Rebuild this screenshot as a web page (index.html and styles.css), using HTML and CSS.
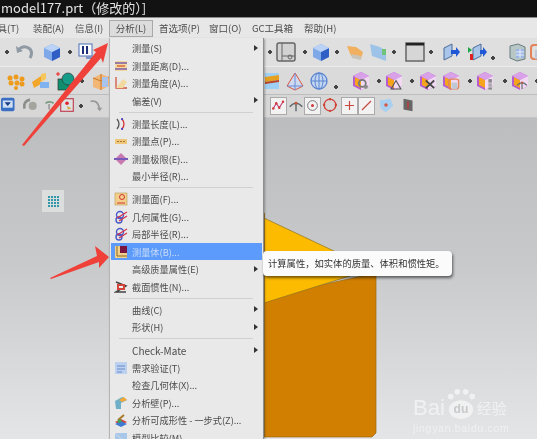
FILE: index.html
```html
<!DOCTYPE html>
<html lang="zh-CN">
<head>
  <meta charset="UTF-8" />
  <title>model177.prt</title>
  <link rel="stylesheet" href="styles.css">
</head>
<body>

  <svg class="defs" width="0" height="0">
    <symbol id="cube" viewBox="0 0 20 20"><path d="M2 6l8-4 8 4v9l-8 4-8-4z" fill="#7fa8e8"/><path d="M10 10l8-4v9l-8 4z" fill="#2f5fc4"/><path d="M2 6l8-4 8 4-8 4z" fill="#b9d2f5"/></symbol>
    <symbol id="book" viewBox="0 0 20 20"><rect x="3" y="2" width="13" height="12" fill="#fff" stroke="#4a6fb5"/><rect x="6" y="4" width="2" height="8" fill="#1d2f78"/><rect x="10" y="4" width="2" height="8" fill="#1d2f78"/><path d="M10 14h8v3h-8z" fill="#7f93c4"/></symbol>
    <symbol id="undo" viewBox="0 0 20 20"><path d="M3 8q6-6 12-1 3 4 0 9" fill="none" stroke="#8f9aa5" stroke-width="3"/><path d="M1 4l1 7 6-2z" fill="#8f9aa5"/></symbol>
    <symbol id="panel" viewBox="0 0 20 20"><rect x="1" y="1" width="18" height="18" rx="2" fill="#d2d2d2" stroke="#666" stroke-width="1.5"/><path d="M6 1v18M6 14h13" stroke="#666"/><circle cx="14" cy="15" r="2" fill="none" stroke="#666"/></symbol>
    <symbol id="fold-o" viewBox="0 0 20 20"><path d="M2 4l9 1 7 5-2 7-10-3z" fill="#f0b060"/><path d="M6 12l10 2v4l-9-2z" fill="#c9c4b8"/></symbol>
    <symbol id="fold-b" viewBox="0 0 20 20"><path d="M2 2l10 3 6 4v10l-14-5z" fill="#9ec3e8"/><rect x="14" y="7" width="4" height="6" fill="#6fc47a"/></symbol>
    <symbol id="window" viewBox="0 0 20 20"><rect x="1" y="1" width="18" height="18" fill="#d6d6d6" stroke="#666" stroke-width="1.5"/><rect x="1" y="1" width="18" height="2.5" fill="#222"/></symbol>
    <symbol id="box-arrow" viewBox="0 0 20 20"><path d="M3 6l8-4v12l-8 4z" fill="#a9c6ea" stroke="#4a6b9a"/><path d="M10 8h5V5l4 5-4 5v-3h-5z" fill="#1f57d6"/></symbol>
    <symbol id="box-arrow2" viewBox="0 0 20 20"><path d="M6 6l8-4v12l-8 4z" fill="#a9c6ea" stroke="#4a6b9a"/><path d="M1 5l4 3-4 3z" fill="#1fa84a"/><path d="M3 12h3v6h-3z" fill="#d22"/><path d="M13 8h3V5l4 5-4 5v-3h-3z" fill="#1f57d6"/></symbol>
    <symbol id="doc" viewBox="0 0 20 20"><path d="M3 4l8-2 7 3v12l-8 2-7-3z" fill="#b9c6c6" stroke="#6b7d7d"/><path d="M9 7h8v9h-8z" fill="#9cb5e6"/><path d="M9 10h8M9 13h8M13 7v9" stroke="#e8f0f8"/></symbol>
    <symbol id="doc-o" viewBox="0 0 20 20"><rect x="4" y="3" width="14" height="14" rx="3" fill="none" stroke="#e2835a" stroke-width="2"/><rect x="8" y="8" width="8" height="9" fill="#bfc9d6"/></symbol>
    <symbol id="dots-o" viewBox="0 0 20 20"><g fill="#ee9a1c"><circle cx="4" cy="7" r="2.5"/><circle cx="10" cy="6" r="2.5"/><circle cx="16" cy="8" r="2.5"/><circle cx="5" cy="12" r="2.5"/><circle cx="11" cy="12" r="2.5"/><circle cx="16" cy="13" r="2.5"/><circle cx="10" cy="17" r="2"/></g></symbol>
    <symbol id="orange-cube" viewBox="0 0 20 20"><path d="M1 11l9-6v8l-7 4z" fill="#f2a72a"/><path d="M10 3l5-1v6l-5 3z" fill="#f5c65a"/><rect x="9" y="11" width="9" height="6" fill="#7fb2ee"/></symbol>
    <symbol id="green" viewBox="0 0 20 20"><rect x="2" y="8" width="11" height="11" fill="#0f8f6d" stroke="#333" stroke-width=".7"/><circle cx="12" cy="8" r="6" fill="#159c88" stroke="#333" stroke-width=".7"/><path d="M2 1v4M0 3h4" stroke="#e22"/></symbol>
    <symbol id="box-o" viewBox="0 0 20 20"><path d="M2 7l8-4 8 3v9l-8 4-8-3z" fill="#f2b675"/><path d="M10 3v16M2 7l8 3 8-4" stroke="#c8772c" fill="none"/><rect x="11" y="6" width="6" height="10" fill="#a8c4ee"/></symbol>
    <symbol id="box-y" viewBox="0 0 20 20"><rect x="0" y="2" width="14" height="16" fill="#9ed0f5"/><path d="M0 6l14-2v5l-14 2z" fill="#e6a020"/><path d="M0 11l14-2v2l-14 2z" fill="#b8442a"/></symbol>
    <symbol id="cone" viewBox="0 0 20 20"><path d="M10 2l8 13-8 4-8-4z" fill="#cfd9ef" stroke="#d8553a"/><path d="M10 2v17M2 15l16 0" stroke="#6b8bd8" fill="none"/></symbol>
    <symbol id="sphere" viewBox="0 0 20 20"><circle cx="10" cy="10" r="8" fill="#c3d6f2" stroke="#5b85d0" stroke-width="1.3"/><path d="M2 10h16M10 2v16" stroke="#5b85d0"/><ellipse cx="10" cy="10" rx="4" ry="8" fill="none" stroke="#5b85d0"/></symbol>
    <symbol id="pcube" viewBox="0 0 20 20"><path d="M1 5l8-4 8 4v10l-8 4-8-4z" fill="#b65ccf"/><path d="M3 6l6 3v8l-6-3z" fill="#f7a41d"/><path d="M1 5l8-4 8 4-8 4z" fill="#d9a2e8"/><path d="M9 9l8-4v10l-8 4z" fill="#f1d9f3"/></symbol>
    <symbol id="cross" viewBox="0 0 20 20"><path d="M4 5l12 11M16 5L4 16" stroke="#444" stroke-width="2.5"/></symbol>
    <symbol id="tri" viewBox="0 0 20 20"><path d="M10 5l7 12H3z" fill="none" stroke="#555" stroke-width="1.5"/></symbol>
    <symbol id="gear" viewBox="0 0 20 20"><circle cx="9" cy="9" r="5" fill="none" stroke="#777" stroke-width="2.5"/><circle cx="14" cy="14" r="3" fill="#8b8b8b"/></symbol>
    <symbol id="bars" viewBox="0 0 20 20"><rect x="12" y="3" width="5" height="5" fill="#888"/><rect x="12" y="9" width="5" height="5" fill="#aaa"/><rect x="12" y="15" width="5" height="3" fill="#888"/></symbol>
    <symbol id="wave" viewBox="0 0 20 20"><path d="M3 14l4-7 4 6 5-8" fill="none" stroke="#c03a70" stroke-width="1.5"/><g fill="#d2353a"><circle cx="3" cy="14" r="1.6"/><circle cx="7" cy="7" r="1.6"/><circle cx="11" cy="13" r="1.6"/><circle cx="16" cy="5" r="1.6"/></g></symbol>
    <symbol id="fork" viewBox="0 0 20 20"><path d="M10 8v9M3 12q7-8 14 0" fill="none" stroke="#606a6a" stroke-width="1.6"/><circle cx="10" cy="8" r="1.5" fill="#c53"/></symbol>
    <symbol id="target" viewBox="0 0 20 20"><circle cx="10" cy="10" r="6.5" fill="none" stroke="#777" stroke-width="1.3"/><circle cx="10" cy="10" r="2" fill="#d2353a"/></symbol>
    <symbol id="ring" viewBox="0 0 20 20"><circle cx="10" cy="10" r="6.5" fill="none" stroke="#d2453a" stroke-width="1.5"/><g fill="#c43"><circle cx="10" cy="3.5" r="1.3"/><circle cx="10" cy="16.5" r="1.3"/><circle cx="3.5" cy="10" r="1.3"/><circle cx="16.5" cy="10" r="1.3"/></g></symbol>
    <symbol id="plus" viewBox="0 0 20 20"><path d="M10 4v12M4 10h12" stroke="#c84a40" stroke-width="1.6"/></symbol>
    <symbol id="slash" viewBox="0 0 20 20"><path d="M4 16L16 4" stroke="#c84a40" stroke-width="1.6"/></symbol>
    <symbol id="blue-s" viewBox="0 0 20 20"><path d="M3 5l12-2 3 8-8 7-6-4z" fill="#a9d0f0"/><circle cx="10" cy="10" r="2" fill="#d25a4a"/></symbol>
    <symbol id="dark" viewBox="0 0 20 20"><path d="M5 3l10 2v12l-10-2z" fill="#666"/><path d="M10 6v8" stroke="#c33" stroke-width="1.5"/></symbol>
    <symbol id="drop" viewBox="0 0 20 20"><rect x="0" y="2" width="15" height="15" rx="2" fill="#3b6fc4"/><rect x="2" y="5" width="11" height="8" fill="#cfe0f5"/><path d="M4 7h7l-3.500 4z" fill="#173a80"/></symbol>
    <symbol id="grey-a" viewBox="0 0 20 20"><path d="M4 14q-2-8 6-10" fill="none" stroke="#8a8f8a" stroke-width="3"/><circle cx="13" cy="11" r="4.500" fill="#a5a5a0"/></symbol>
    <symbol id="small-a" viewBox="0 0 20 20"><path d="M5 8q5-3 9 0" fill="none" stroke="#7c9a80" stroke-width="2"/><path d="M9 9v6" stroke="#a0a0a0" stroke-width="2"/></symbol>
    <symbol id="red-box" viewBox="0 0 20 20"><rect x="3" y="3" width="14" height="14" fill="#dfe2e2" stroke="#c04050" stroke-width="1.300"/><circle cx="10" cy="8" r="2" fill="#d23"/><path d="M10 11l5 3-4 1z" fill="#d9a53a"/></symbol>
    <symbol id="curve" viewBox="0 0 20 20"><path d="M4 6q8-2 10 8" fill="none" stroke="#999" stroke-width="2"/><path d="M11 13l3 4 3-4z" fill="#999"/></symbol>

    <symbol id="m-dist" viewBox="0 0 14 14"><rect x="1" y="2" width="12" height="10" fill="#f3d9a0"/><path d="M1 4h12M1 10h12" stroke="#7b5ca8" stroke-width="1.300"/><path d="M3 7h8" stroke="#d8552a" stroke-width="1.300"/></symbol>
    <symbol id="m-angle" viewBox="0 0 14 14"><path d="M2 1v11h11" fill="none" stroke="#d2553f" stroke-width="1.300"/><path d="M2 12L9 3l4 3-4 6z" fill="#f1d9a0"/></symbol>
    <symbol id="m-len" viewBox="0 0 14 14"><path d="M3 2q4 5 0 10" fill="none" stroke="#555" stroke-width="1.300"/><path d="M8 2q4 5 0 10" fill="none" stroke="#d2353a" stroke-width="1.300"/><circle cx="8" cy="2" r="1" fill="#33c"/><circle cx="8" cy="12" r="1" fill="#33c"/></symbol>
    <symbol id="m-pt" viewBox="0 0 14 14"><rect x="1" y="5" width="12" height="5" fill="#eec878"/><path d="M3 7.500h8" stroke="#a8763a" stroke-dasharray="2 1"/></symbol>
    <symbol id="m-lim" viewBox="0 0 14 14"><path d="M7 1l6 6-6 6-6-6z" fill="#c87ab0"/><path d="M0 7h14" stroke="#7a5ab8" stroke-width="2"/></symbol>
    <symbol id="m-face" viewBox="0 0 14 14"><rect x="1" y="1" width="12" height="12" fill="#f2d08a" stroke="#b89a5a" stroke-width=".6"/><circle cx="8" cy="5" r="2.500" fill="none" stroke="#d2353a"/><path d="M3 11h8" stroke="#d2353a"/></symbol>
    <symbol id="m-geo" viewBox="0 0 14 14"><circle cx="6" cy="5" r="3.500" fill="none" stroke="#4a5ac8" stroke-width="1.400"/><circle cx="5" cy="10" r="3" fill="none" stroke="#4a5ac8" stroke-width="1.400"/><path d="M3 8l10-6M5 11l8-5" stroke="#d2354a" stroke-width="1.200"/></symbol>
    <symbol id="m-body" viewBox="0 0 14 14"><rect x="1" y="1" width="12" height="12" fill="#f2d08a"/><path d="M3 1v10h10" fill="none" stroke="#8a6a2a"/><rect x="6" y="1" width="7" height="7" fill="#7a1440"/></symbol>
    <symbol id="m-sec" viewBox="0 0 14 14"><path d="M2 2l10 4-10 6 10 0" fill="none" stroke="#444" stroke-width="1.500"/><path d="M3 4h8v6H3z" fill="#d2453a"/><rect x="5" y="6" width="4" height="2" fill="#eee"/></symbol>
    <symbol id="m-req" viewBox="0 0 14 14"><rect x="1" y="1" width="12" height="12" fill="#bcd0f0"/><path d="M3 5h8M3 8h8M3 11h5" stroke="#6a8ac8"/></symbol>
    <symbol id="m-wall" viewBox="0 0 14 14"><path d="M1 5l7-4 5 3-6 3v6H2z" fill="#6fb0c8"/><path d="M5 4l5-3 3 3-5 2z" fill="#f0a83a"/></symbol>
    <symbol id="m-form" viewBox="0 0 14 14"><path d="M1 9l6-3 6 3-6 3z" fill="#d2453a"/><path d="M1 11l6-3 6 3-6 3z" fill="#3f7ad2"/><path d="M4 7l6-5" stroke="#a87a2a" stroke-width="2"/><path d="M3 8l3-2 2 2-3 2z" fill="#3fa84a"/></symbol>
    <symbol id="m-cmp" viewBox="0 0 14 14"><rect x="1" y="2" width="12" height="11" fill="#a8c8ea"/><path d="M1 2l12 11" stroke="#d2d8e8"/></symbol>
  </svg>

  <div class="app">
    <div class="titlebar">model177.prt（修改的）]</div>

    <div class="menubar">
      <span class="menu-title w-tools">工具(T)</span>
      <span class="menu-title w-asm">装配(A)</span>
      <span class="menu-title w-info">信息(I)</span>
      <span class="menu-title active">分析(L)</span>
      <span class="menu-title w-pref">首选项(P)</span>
      <span class="menu-title w-win">窗口(O)</span>
      <span class="menu-title w-gc">GC工具箱</span>
      <span class="menu-title">帮助(H)</span>
    </div>

    <div class="toolbar row1">
      <div class="side left">
        <i class="d"></i>
        <span class="t g2"><svg><use href="#undo"/></svg></span>
        <span class="t g7"><svg><use href="#cube"/></svg></span>
        <i class="d g2"></i>
        <span class="t"><svg><use href="#book"/></svg></span>
      </div>
      <div class="side">
        <i class="d"></i>
        <span class="t"><svg><use href="#panel"/></svg></span>
        <i class="d g3"></i>
        <span class="t"><svg><use href="#cube"/></svg></span>
        <i class="d"></i>
        <span class="t g2"><svg><use href="#fold-o"/></svg></span>
        <span class="t g3"><svg><use href="#fold-b"/></svg></span>
        <i class="d"></i>
        <span class="t g5"><svg><use href="#window"/></svg></span>
        <i class="d"></i>
        <span class="t g4"><svg><use href="#box-arrow"/></svg></span>
        <span class="t g6"><svg><use href="#box-arrow2"/></svg></span>
        <i class="d low"></i>
        <span class="t g8"><svg><use href="#doc"/></svg></span>
        <span class="t"><svg><use href="#doc-o"/></svg></span>
      </div>
    </div>

    <div class="toolbar row2">
      <div class="side left">
        <span class="t g5"><svg><use href="#dots-o"/></svg></span>
        <span class="t g5"><svg><use href="#orange-cube"/></svg></span>
        <span class="t g5"><svg><use href="#green"/></svg></span>
        <i class="d"></i>
        <span class="t g3"><svg><use href="#box-o"/></svg></span>
      </div>
      <div class="side">
        <span class="t g1"><svg><use href="#box-y"/></svg></span>
        <span class="t"><svg><use href="#cone"/></svg></span>
        <span class="t g4"><svg><use href="#sphere"/></svg></span>
        <i class="d low g1"></i>
        <span class="t g10 icon-mark"><svg><use href="#pcube"/></svg><svg class="mark"><use href="#gear"/></svg></span>
        <i class="d g1"></i>
        <span class="t icon-mark"><svg><use href="#pcube"/></svg><svg class="mark"><use href="#tri"/></svg></span>
        <i class="d g1"></i>
        <span class="t g1 icon-mark"><svg><use href="#pcube"/></svg><svg class="mark"><use href="#cross"/></svg></span>
        <span class="t g3 icon-mark"><svg><use href="#pcube"/></svg><svg class="mark"><use href="#doc-o"/></svg></span>
        <i class="d g2"></i>
        <span class="t icon-mark"><svg><use href="#pcube"/></svg><svg class="mark"><use href="#bars"/></svg></span>
        <i class="d g3"></i>
        <span class="t icon-mark"><svg><use href="#pcube"/></svg><svg class="mark"><use href="#fork"/></svg></span>
        <i class="d"></i>
      </div>
    </div>

    <div class="toolbar row3">
      <div class="side left">
        <span class="t"><svg><use href="#drop"/></svg></span>
        <span class="t g3"><svg><use href="#grey-a"/></svg></span>
        <span class="t g3"><svg><use href="#small-a"/></svg></span>
        <span class="t"><svg><use href="#red-box"/></svg></span>
        <i class="d"></i>
        <span class="t"><svg><use href="#curve"/></svg></span>
      </div>
      <div class="side">
        <span class="t btn"><svg><use href="#wave"/></svg></span>
        <span class="t"><svg><use href="#fork"/></svg></span>
        <span class="t btn"><svg><use href="#target"/></svg></span>
        <span class="t"><svg><use href="#ring"/></svg></span>
        <span class="t btn g3"><svg><use href="#plus"/></svg></span>
        <span class="t btn"><svg><use href="#slash"/></svg></span>
        <span class="t g2"><svg><use href="#blue-s"/></svg></span>
        <span class="t g5"><svg><use href="#dark"/></svg></span>
      </div>
    </div>

    <div class="canvas"></div>

    <svg class="solid" viewBox="0 0 140 240">
      <path d="M0 85L114 60V220L110 224H0z" fill="#d17f00" stroke="#9c6a14" stroke-width=".7"/>
      <path d="M2 5L110 56 2 90z" fill="#fdbb00" stroke="#8c7420" stroke-width=".7"/>
      <rect x="0" y="0" width="3" height="224" fill="#a07a30"/>
    </svg>

    <div class="view-btn">
      <div class="view-dots">
        <i></i><i></i><i></i><i></i><i></i><i></i><i></i><i></i>
        <i></i><i></i><i></i><i></i><i></i><i></i><i></i><i></i>
      </div>
    </div>

    <div class="watermark">
      <div class="wm-top">
        <span class="wm-bai">Bai</span>
        <svg class="wm-paw" viewBox="0 0 30 34">
          <g fill="#f1f1f1"><circle cx="4" cy="9" r="3"/><circle cx="11" cy="4" r="3"/><circle cx="20" cy="4" r="3"/><circle cx="27" cy="9" r="3"/><ellipse cx="15" cy="23" rx="13" ry="10"/></g>
          <text x="15" y="27" class="wm-du">du</text>
        </svg>
        <span class="wm-cn">经验</span>
      </div>
      <div class="wm-url">jingyan.baidu.com</div>
    </div>

    <div class="menu">
      <div class="item sub">测量(S)</div>
      <div class="item"><svg><use href="#m-dist"/></svg>测量距离(D)...</div>
      <div class="item"><svg><use href="#m-angle"/></svg>测量角度(A)...</div>
      <div class="item sub">偏差(V)</div>
      <div class="sep"></div>
      <div class="item"><svg><use href="#m-len"/></svg>测量长度(L)...</div>
      <div class="item"><svg><use href="#m-pt"/></svg>测量点(P)...</div>
      <div class="item"><svg><use href="#m-lim"/></svg>测量极限(E)...</div>
      <div class="item">最小半径(R)...</div>
      <div class="sep"></div>
      <div class="item"><svg><use href="#m-face"/></svg>测量面(F)...</div>
      <div class="item"><svg><use href="#m-geo"/></svg>几何属性(G)...</div>
      <div class="item"><svg><use href="#m-geo"/></svg>局部半径(R)...</div>
      <div class="item selected"><svg><use href="#m-body"/></svg>测量体(B)...</div>
      <div class="item sub">高级质量属性(E)</div>
      <div class="item"><svg><use href="#m-sec"/></svg>截面惯性(N)...</div>
      <div class="sep"></div>
      <div class="item sub">曲线(C)</div>
      <div class="item sub">形状(H)</div>
      <div class="sep"></div>
      <div class="item sub latin">Check-Mate</div>
      <div class="item"><svg><use href="#m-req"/></svg>需求验证(T)</div>
      <div class="item">检查几何体(X)...</div>
      <div class="item"><svg><use href="#m-wall"/></svg>分析壁(P)...</div>
      <div class="item"><svg><use href="#m-form"/></svg>分析可成形性 - 一步式(Z)...</div>
      <div class="item"><svg><use href="#m-cmp"/></svg>模型比较(M)...</div>
    </div>

    <div class="tooltip">计算属性，如实体的质量、体积和惯性矩。</div>

    <svg class="arrows" viewBox="0 0 537 439">
      <path d="M22 145L96 52 93 50 108 43 103 63 101 58 24 146z" fill="#f0403a"/>
      <path d="M50 278L97 256 95 246 109 257 99 268 99 262 51 279z" fill="#f0403a"/>
    </svg>
  </div>

</body>
</html>
```

FILE: styles.css
```css
body {
  margin: 0;
  background-color: #d0d0d0;
  font-family: "Noto Sans CJK SC", "Noto Sans", sans-serif;
  overflow: hidden;
}

.defs {
  display: block;
}

.app {
  position: relative;
  display: flex;
  flex-direction: column;
  width: 537px;
  height: 439px;
  overflow: hidden;
  filter: blur(0.7px);
}

.titlebar {
  flex: 0 0 17px;
  padding-left: 1px;
  background-color: #121212;
  color: #e4e4e4;
  font-size: 13px;
  line-height: 15px;
  white-space: nowrap;
}

.menubar {
  flex: 0 0 21px;
  display: flex;
  align-items: center;
  margin-left: -12px;
  background-color: #e7e7e7;
  border-top: 1px solid #8a8a8a;
  box-sizing: border-box;
  color: #4c4c4c;
  font-size: 9.5px;
  white-space: nowrap;
}

.menu-title {
  flex: none;
}

.w-tools { width: 45px; }
.w-asm { width: 42px; }
.w-info { width: 34px; }
.w-pref { width: 50px; }
.w-win { width: 43px; }
.w-gc { width: 52px; }

.menu-title.active {
  width: 44px;
  height: 17px;
  margin-right: 6px;
  box-sizing: border-box;
  border: 1px solid #a9a9a9;
  background-color: #dcdcdc;
  text-align: center;
  line-height: 15px;
}

.toolbar {
  display: flex;
  box-sizing: border-box;
  background-color: #dfdfdf;
}

.row1 {
  flex: 0 0 28px;
}

.row2 {
  flex: 0 0 28px;
  background-color: #dadada;
  border-top: 1px solid #ececec;
}

.row3 {
  flex: 0 0 24px;
  background-color: #d7d7d7;
  border-top: 1px solid #bdbdbd;
  border-bottom: 1px solid #c4c4c4;
}

.side {
  display: flex;
  align-items: center;
}

.side.left {
  flex: 0 0 264px;
  padding-left: 1px;
  box-sizing: border-box;
}

.row3 .side:last-child {
  padding-left: 6px;
}

.t {
  position: relative;
  flex: none;
  width: 20px;
  height: 20px;
}

.t svg {
  display: block;
  width: 20px;
  height: 20px;
}

.row3 .t {
  width: 17px;
}

.row3 .t svg {
  width: 18px;
  height: 18px;
}

.row3 .t.btn {
  height: 18px;
  box-sizing: border-box;
  border: 1px solid #aaa;
  background-color: #f2f2f2;
}

.row3 .t.btn svg {
  width: 15px;
  height: 15px;
}

.icon-mark .mark {
  position: absolute;
  left: 4px;
  top: 6px;
  width: 14px;
  height: 14px;
}

.d {
  flex: none;
  width: 12px;
  height: 4px;
  background: radial-gradient(circle at center, #444 1.6px, transparent 2px);
}

.d.low {
  margin-top: 12px;
}

.g1 { margin-left: 1px; }
.g2 { margin-left: 2px; }
.g3 { margin-left: 3px; }
.g4 { margin-left: 4px; }
.g5 { margin-left: 5px; }
.g6 { margin-left: 6px; }
.g7 { margin-left: 7px; }
.g8 { margin-left: 8px; }
.g10 { margin-left: 10px; }

.canvas {
  flex: 1;
  background: linear-gradient(180deg, #bcbdbf 0%, #c8c9cb 45%, #e4e5e6 100%);
}

.solid {
  position: absolute;
  left: 262px;
  top: 213px;
  width: 140px;
  height: 240px;
}

.view-btn {
  position: absolute;
  left: 42px;
  top: 190px;
  width: 22px;
  height: 22px;
  display: flex;
  align-items: center;
  justify-content: center;
  background-color: #dcdddd;
}

.view-dots {
  display: grid;
  grid-template-columns: repeat(4, 2px);
  gap: 1px;
}

.view-dots i {
  width: 2px;
  height: 2px;
  background-color: #2f98a8;
}

.watermark {
  position: absolute;
  left: 413px;
  top: 386px;
  color: #f1f1f1;
}

.wm-top {
  display: flex;
  align-items: flex-end;
  height: 34px;
}

.wm-bai {
  font-family: "Liberation Sans", sans-serif;
  font-size: 22px;
  line-height: 24px;
}

.wm-paw {
  width: 28px;
  height: 32px;
  margin: 0 2px;
}

.wm-du {
  fill: #c8c9cb;
  font-family: "Liberation Sans", sans-serif;
  font-size: 13px;
  font-weight: bold;
  text-anchor: middle;
}

.wm-cn {
  font-size: 15px;
  line-height: 24px;
}

.wm-url {
  font-family: "Liberation Sans", sans-serif;
  font-size: 10.5px;
  margin-top: 2px;
  letter-spacing: 0.7px;
  white-space: nowrap;
}

.menu {
  position: absolute;
  left: 109px;
  top: 38px;
  width: 155px;
  height: 410px;
  box-sizing: border-box;
  padding: 1.25px 1px 0;
  background-color: #e9e9e9;
  border-left: 1px solid #b5b5b5;
  border-right: 1px solid #8e8e8e;
  box-shadow: 1px 1px 2px rgba(0, 0, 0, 0.3);
  color: #4c4c4c;
  font-size: 9.2px;
}

.item {
  position: relative;
  display: flex;
  align-items: center;
  height: 17.5px;
  padding-left: 21px;
  white-space: nowrap;
}

.item.latin {
  font-size: 10px;
}

.item svg {
  position: absolute;
  left: 3px;
  top: 2px;
  width: 14px;
  height: 14px;
}

.item.sub::after {
  content: "";
  position: absolute;
  right: 4px;
  top: 5.5px;
  border-left: 4px solid #333;
  border-top: 3px solid transparent;
  border-bottom: 3px solid transparent;
}

.item.selected {
  background-color: #5c9bfb;
  color: #c9dcf8;
}

.sep {
  height: 1px;
  margin: 2.25px 9px 2.25px 8px;
  background-color: #d0d0d0;
}

.tooltip {
  position: absolute;
  left: 263px;
  top: 251px;
  width: 189px;
  height: 25px;
  box-sizing: border-box;
  padding-left: 5px;
  background-color: #fbfbfb;
  border-radius: 4px;
  box-shadow: 1px 2px 3px rgba(0, 0, 0, 0.55);
  color: #333;
  font-size: 9.3px;
  line-height: 25px;
  white-space: nowrap;
}

.arrows {
  position: absolute;
  left: 0;
  top: 0;
  width: 537px;
  height: 439px;
  pointer-events: none;
}
```
